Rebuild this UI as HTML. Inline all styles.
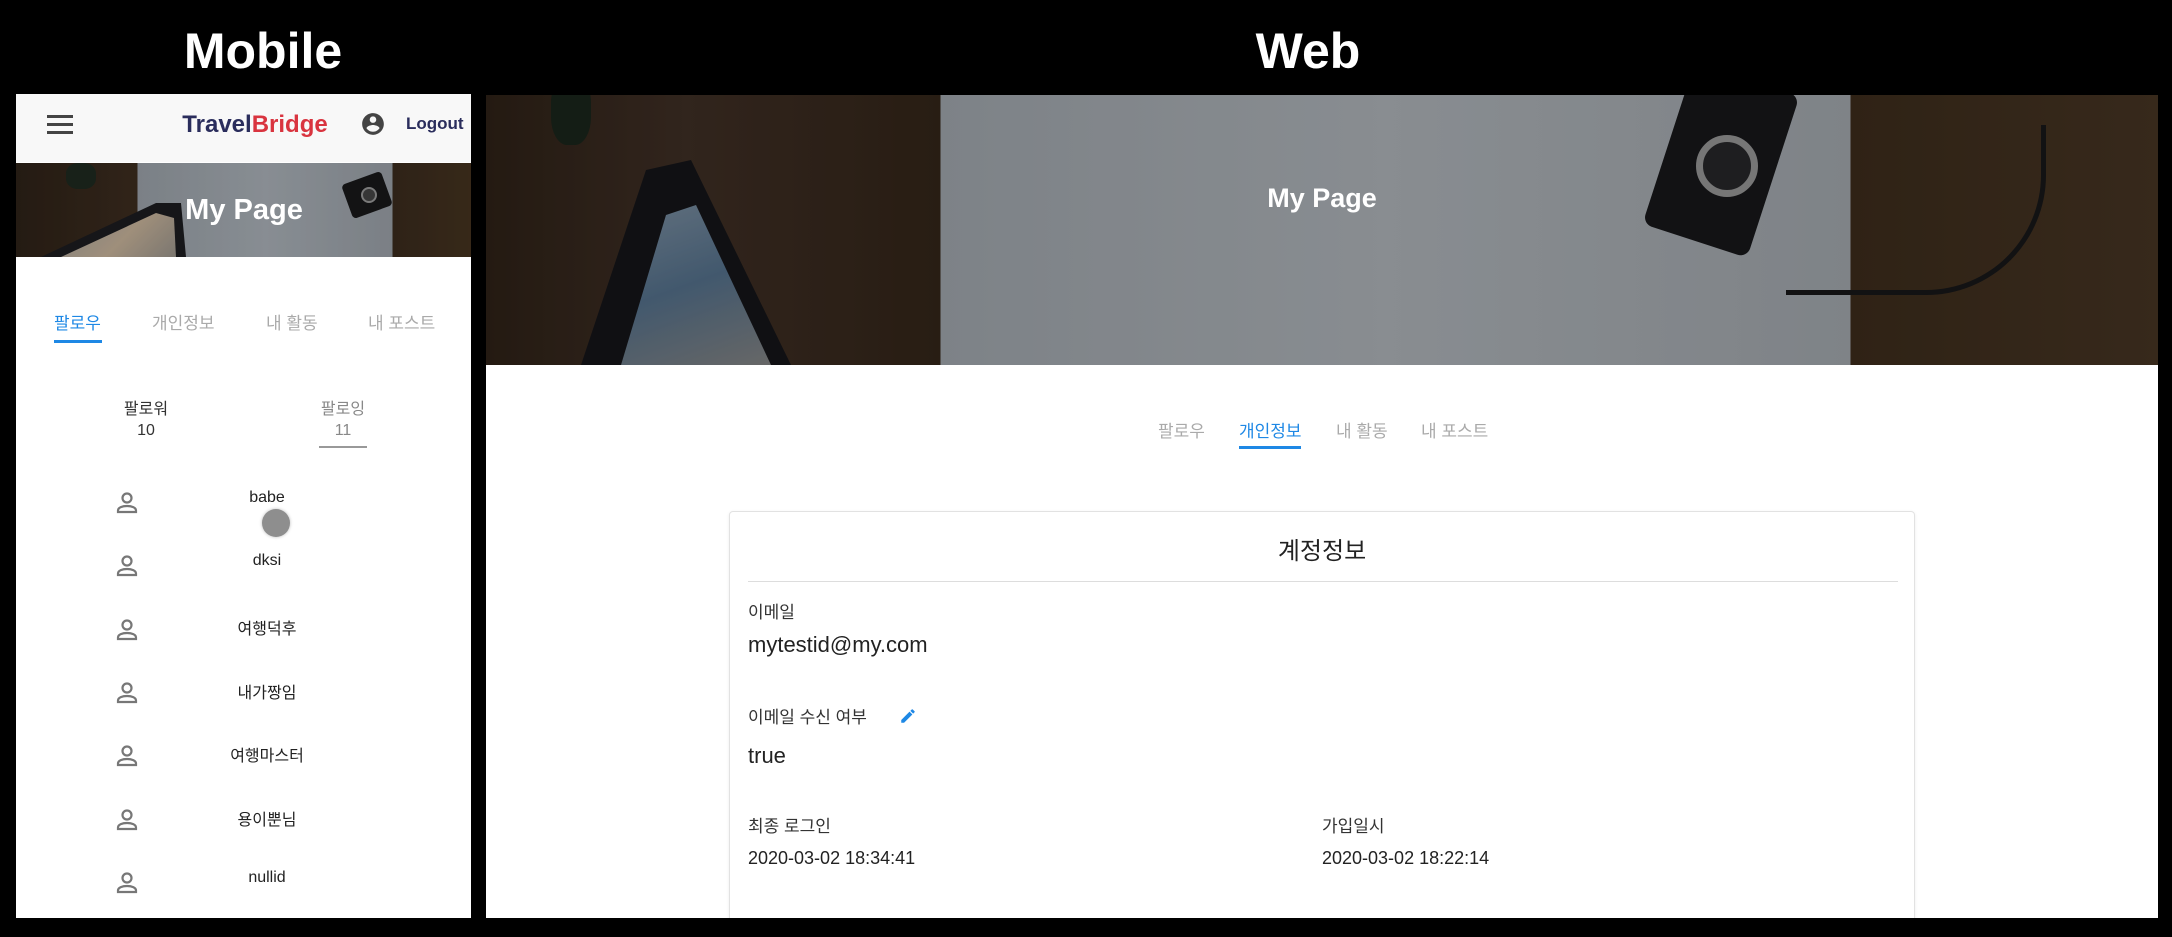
<!DOCTYPE html>
<html><head><meta charset="utf-8">
<style>
*{margin:0;padding:0;box-sizing:border-box}
body{width:2172px;height:937px;background:#000;position:relative;overflow:hidden;font-family:"Liberation Sans","Noto Sans CJK KR",sans-serif}
.abs{position:absolute}
.h{color:#fff;font-weight:bold;font-size:50px;top:22px;transform:translateX(-50%)}
.c{transform:translateX(-50%);white-space:nowrap}
</style></head><body>
<div class="abs h" style="left:263px">Mobile</div>
<div class="abs h" style="left:1308px">Web</div>

<!-- MOBILE -->
<div class="abs" style="left:16px;top:94px;width:455px;height:824px;background:#fff;overflow:hidden">
  <div class="abs" style="left:0;top:0;width:455px;height:68px;background:#f8f8f8"></div>
  <div class="abs" style="left:31px;top:21px;width:26px;height:3px;background:#444;box-shadow:0 8px 0 #444,0 16px 0 #444"></div>
  <div class="abs c" style="left:239px;top:17px;font-size:24px;font-weight:bold;color:#2a2d5c">Travel<span style="color:#d9343f">Bridge</span></div>
  <svg class="abs" style="left:344px;top:17px" width="26" height="26" viewBox="0 0 24 24"><path fill="#444" d="M12 2C6.48 2 2 6.48 2 12s4.48 10 10 10 10-4.48 10-10S17.52 2 12 2zm0 3c1.66 0 3 1.34 3 3s-1.34 3-3 3-3-1.34-3-3 1.34-3 3-3zm0 14.2c-2.5 0-4.71-1.28-6-3.22.03-1.99 4-3.08 6-3.08 1.99 0 5.97 1.09 6 3.08-1.29 1.94-3.5 3.22-6 3.22z"/></svg>
  <div class="abs" style="left:390px;top:20px;font-size:17px;font-weight:bold;color:#2a2d5c">Logout</div>
  <!-- banner -->
  <div class="abs" style="left:0;top:69px;width:455px;height:94px;overflow:hidden;background:linear-gradient(90deg,#2e2218 0,#3d2d1f 121px,#9aa1a8 122px,#aab1b8 250px,#9aa0a7 376px,#3a2b1d 377px,#45331f 455px)">
    <div class="abs" style="left:0;top:0;width:455px;height:94px;clip-path:polygon(25px 94px,140px 40px,165px 40px,170px 94px);background:#1c1c20"></div>
    <div class="abs" style="left:0;top:0;width:455px;height:94px;clip-path:polygon(45px 94px,140px 50px,158px 55px,160px 94px);background:linear-gradient(135deg,#7b8ea5,#c7b39a,#556577,#d0c8c0)"></div>
    <div class="abs" style="left:330px;top:14px;width:42px;height:36px;background:#18181a;border-radius:4px;transform:rotate(-20deg)"></div>
    <div class="abs" style="left:345px;top:24px;width:16px;height:16px;border-radius:50%;background:#444;border:2px solid #999"></div>
    <div class="abs" style="left:50px;top:0;width:30px;height:26px;background:#1e2a20;border-radius:40%"></div>
    <div class="abs" style="left:0;top:0;width:455px;height:94px;background:rgba(0,0,0,.2)"></div>
  </div>
  <div class="abs c" style="left:228px;top:100px;font-size:29px;font-weight:bold;color:#fff">My Page</div>
  <!-- tabs -->
  <div class="abs" style="left:38px;top:215px;font-size:17px;color:#1e88e5">팔로우</div>
  <div class="abs" style="left:38px;top:246px;width:48px;height:3px;background:#1e88e5"></div>
  <div class="abs" style="left:136px;top:215px;font-size:17px;color:#aaa">개인정보</div>
  <div class="abs" style="left:250px;top:215px;font-size:17px;color:#aaa">내 활동</div>
  <div class="abs" style="left:352px;top:215px;font-size:17px;color:#aaa">내 포스트</div>
  <div class="abs c" style="left:130px;top:301px;font-size:16px;color:#333">팔로워</div>
  <div class="abs c" style="left:130px;top:328px;font-size:16px;color:#333">10</div>
  <div class="abs c" style="left:327px;top:301px;font-size:16px;color:#888">팔로잉</div>
  <div class="abs c" style="left:327px;top:328px;font-size:16px;color:#888">11</div>
  <div class="abs" style="left:303px;top:352px;width:48px;height:2px;background:#999"></div>
</div>

<!-- WEB -->
<div class="abs" style="left:486px;top:95px;width:1672px;height:823px;background:#fff;overflow:hidden">
  <div class="abs" style="left:0;top:0;width:1672px;height:270px;overflow:hidden;background:linear-gradient(90deg,#34261a 0,#47352a 200px,#3a2a1c 454px,#b4bbc2 455px,#c4cad0 900px,#b6bcc2 1364px,#44321f 1365px,#4f3b28 1672px)">
    <div class="abs" style="left:0;top:0;width:1672px;height:270px;clip-path:polygon(95px 270px,160px 75px,205px 65px,305px 270px);background:#18181c"></div>
    <div class="abs" style="left:0;top:0;width:1672px;height:270px;clip-path:polygon(135px 270px,180px 120px,210px 110px,285px 270px);background:linear-gradient(160deg,#d0d5da,#5f7f9d 30%,#c8a98a 55%,#3a4a5a 75%,#a9b3bd)"></div>
    <div class="abs" style="left:1180px;top:-20px;width:110px;height:170px;background:#1a1a1d;border-radius:10px;transform:rotate(18deg)"></div>
    <div class="abs" style="left:1210px;top:40px;width:62px;height:62px;border-radius:50%;background:#2b2b2e;border:7px solid #aaa"></div>
    <path></path>
    <div class="abs" style="left:1300px;top:30px;width:260px;height:170px;border:5px solid #1a1a1c;border-left:none;border-top:none;border-radius:0 0 120px 0"></div>
    <div class="abs" style="left:65px;top:-20px;width:40px;height:70px;background:#1d2a1f;border-radius:40%"></div>
    <div class="abs" style="left:0;top:0;width:1672px;height:270px;background:rgba(0,0,0,.3)"></div>
  </div>
  <div class="abs c" style="left:836px;top:88px;font-size:27px;font-weight:bold;color:#fff">My Page</div>
  <!-- tabs -->
  <div class="abs" style="left:672px;top:322px;font-size:17px;color:#aaa">팔로우</div>
  <div class="abs" style="left:753px;top:322px;font-size:17px;color:#1e88e5">개인정보</div>
  <div class="abs" style="left:753px;top:351px;width:62px;height:3px;background:#1e88e5"></div>
  <div class="abs" style="left:850px;top:322px;font-size:17px;color:#aaa">내 활동</div>
  <div class="abs" style="left:935px;top:322px;font-size:17px;color:#aaa">내 포스트</div>
  <!-- card -->
  <div class="abs" style="left:243px;top:416px;width:1186px;height:440px;border:1px solid #e2e2e2;border-radius:4px;box-shadow:0 1px 3px rgba(0,0,0,.08)"></div>
  <div class="abs c" style="left:836px;top:436px;font-size:24px;color:#222">계정정보</div>
  <div class="abs" style="left:262px;top:486px;width:1150px;height:1px;background:#ddd"></div>
  <div class="abs" style="left:262px;top:503px;font-size:17px;color:#333">이메일</div>
  <div class="abs" style="left:262px;top:537px;font-size:22px;color:#222">mytestid@my.com</div>
  <div class="abs" style="left:262px;top:608px;font-size:17px;color:#333">이메일 수신 여부</div>
  <svg class="abs" style="left:413px;top:612px" width="18" height="18" viewBox="0 0 24 24"><path fill="#1e88e5" d="M3 17.25V21h3.75L17.81 9.94l-3.75-3.75L3 17.25zM20.71 7.04a1 1 0 000-1.41l-2.34-2.34a1 1 0 00-1.41 0l-1.83 1.83 3.75 3.75 1.83-1.83z"/></svg>
  <div class="abs" style="left:262px;top:648px;font-size:22px;color:#222">true</div>
  <div class="abs" style="left:262px;top:717px;font-size:17px;color:#333">최종 로그인</div>
  <div class="abs" style="left:262px;top:753px;font-size:18px;color:#222">2020-03-02 18:34:41</div>
  <div class="abs" style="left:836px;top:717px;font-size:17px;color:#333">가입일시</div>
  <div class="abs" style="left:836px;top:753px;font-size:18px;color:#222">2020-03-02 18:22:14</div>
</div>

<!-- mobile list -->
<svg class="abs" style="left:114px;top:492px" width="26" height="420" viewBox="0 0 26 420">
 <g fill="none" stroke="#777" stroke-width="2.2">
  <g id="u"><circle cx="13" cy="6" r="4.5"/><path d="M4 20v-1.5c0-3 4.5-4.5 9-4.5s9 1.5 9 4.5V20z"/></g>
  <use href="#u" y="63"/><use href="#u" y="127"/><use href="#u" y="190"/><use href="#u" y="253"/><use href="#u" y="317"/><use href="#u" y="380"/>
 </g>
</svg>
<div class="abs c" style="left:267px;top:489px;font-size:16px;color:#222">babe</div>
<div class="abs" style="left:262px;top:509px;width:28px;height:28px;border-radius:50%;background:#8e8e8e;box-shadow:0 0 3px #bbb"></div>
<div class="abs c" style="left:267px;top:552px;font-size:16px;color:#222">dksi</div>
<div class="abs c" style="left:267px;top:615px;font-size:16px;color:#222">여행덕후</div>
<div class="abs c" style="left:267px;top:679px;font-size:16px;color:#222">내가짱임</div>
<div class="abs c" style="left:267px;top:742px;font-size:16px;color:#222">여행마스터</div>
<div class="abs c" style="left:267px;top:806px;font-size:16px;color:#222">용이뿐님</div>
<div class="abs c" style="left:267px;top:869px;font-size:16px;color:#222">nullid</div>
</body></html>
